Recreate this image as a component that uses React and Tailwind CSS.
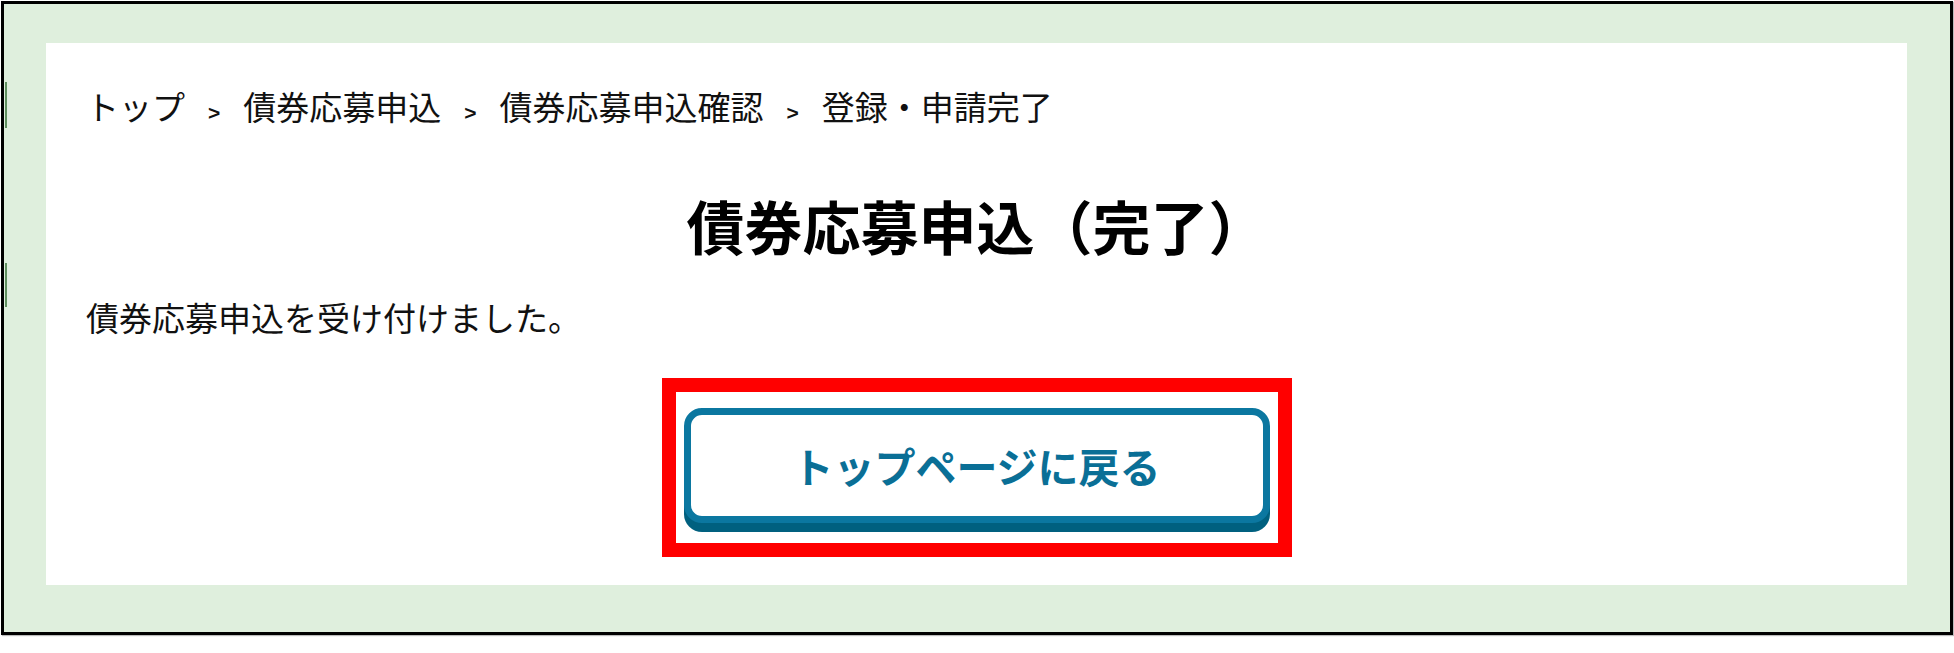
import React from 'react';

const crumbs = ['トップ', '債券応募申込', '債券応募申込確認', '登録・申請完了'];

const jp = "font-['Noto_Sans_CJK_JP','Noto_Sans',sans-serif]";

function Breadcrumb() {
  return (
    <div className={`flex items-baseline pl-[40px] pt-[39px] text-[33px] leading-[48px] text-[#111] ${jp}`}>
      {crumbs.map((c, i) => (
        <React.Fragment key={c}>
          {i > 0 && (
            <span className="mx-[23px] text-[21px] font-['Liberation_Sans',sans-serif] font-bold">&gt;</span>
          )}
          <span>{c}</span>
        </React.Fragment>
      ))}
    </div>
  );
}

export default function App() {
  return (
    <div className="w-[1954px] h-[653px] bg-white pl-[1px] pt-[1px]">
      <div className="relative w-[1952px] h-[634px] border-[3px] border-black bg-[#dfefdd] pl-[42px] pt-[39px] pr-[43px] pb-[47px] shadow-[1px_1px_1px_#bbb]">
        {/* faint marks along the left edge */}
        <div className="absolute left-[1px] top-[78px] w-[2px] h-[46px] bg-[#5f8f5f]" />
        <div className="absolute left-[1px] top-[259px] w-[2px] h-[44px] bg-[#5f8f5f]" />

        <div className="w-full h-full bg-white flex flex-col">
          <Breadcrumb />

          <h1 className={`mt-[47px] text-center text-[58px] leading-[82px] font-bold text-black ${jp}`}>
            債券応募申込（完了）
          </h1>

          <p className={`mt-[27px] pl-[40px] text-[33px] leading-[48px] text-[#111] ${jp}`}>
            債券応募申込を受け付けました。
          </p>

          {/* highlighted return button; bottom padding leaves room for the raised edge */}
          <div className="mt-[37px] mx-auto w-[630px] border-[14px] border-[#ff0000] pt-[16px] pb-[20px] px-[8px]">
            <button
              className={`w-full h-[115px] rounded-[18px] border-[7px] border-[#0b77a0] bg-white shadow-[0_9px_0_#00607f] text-[41px] font-semibold text-[#0a6f96] ${jp}`}
            >
              トップページに戻る
            </button>
          </div>
        </div>
      </div>
    </div>
  );
}
